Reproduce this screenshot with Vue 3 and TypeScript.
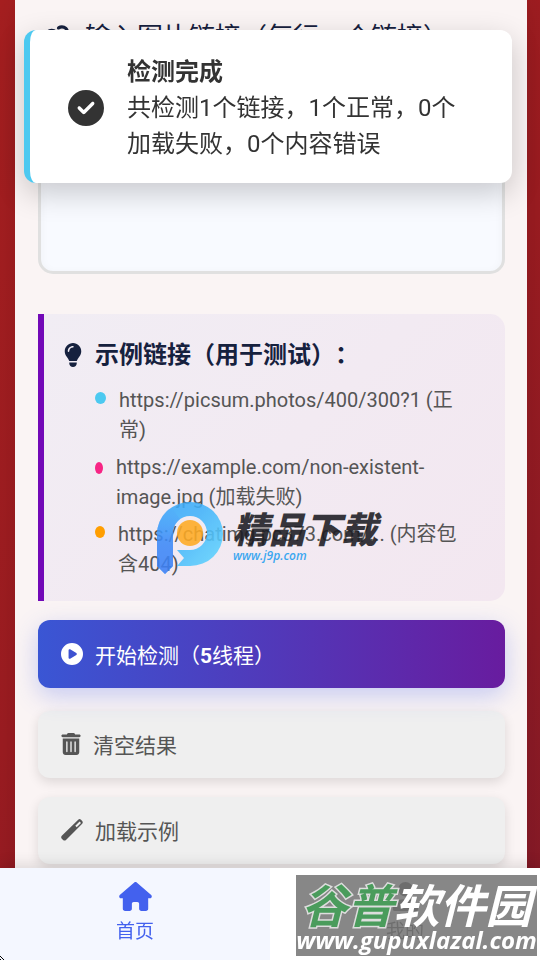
<script setup lang="ts">
import { ref } from 'vue'

interface Sample {
  text: string
  tone: string
}

const links = ref('')

const samples: Sample[] = [
  { text: 'https://picsum.photos/400/300?1 (正常)', tone: 'ok' },
  { text: 'https://example.com/non-existent-image.jpg (加载失败)', tone: 'fail' },
  { text: 'https://chatimg.pc373.com/... (内容包含404)', tone: 'warn' },
]
</script>

<template>
  <div class="page">
    <div class="toast" role="status">
      <svg class="toast-icon" viewBox="0 0 512 512" aria-hidden="true">
        <path d="M256 512A256 256 0 1 0 256 0a256 256 0 1 0 0 512zM369 209L241 337c-9.4 9.4-24.6 9.4-33.9 0l-64-64c-9.4-9.4-9.4-24.6 0-33.9s24.6-9.4 33.9 0l47 47L335 175c9.4-9.4 24.6-9.4 33.9 0s9.4 24.6 0 33.9z" />
      </svg>
      <div class="toast-body">
        <strong>检测完成</strong>
        <p>共检测1个链接，1个正常，0个加载失败，0个内容错误</p>
      </div>
    </div>

    <main class="card">
      <label class="heading" for="links">
        <svg class="link-icon" viewBox="0 0 640 512" aria-hidden="true">
          <path d="M579.8 267.7c56.5-56.5 56.5-148 0-204.5c-50-50-128.8-56.5-186.3-15.4l-1.6 1.1c-14.4 10.3-17.7 30.3-7.4 44.6s30.3 17.7 44.6 7.4l1.6-1.1c32.1-22.9 76-19.3 103.8 8.6c31.5 31.5 31.5 82.5 0 114L422.3 334.8c-31.5 31.5-82.5 31.5-114 0c-27.9-27.9-31.5-71.8-8.6-103.8l1.1-1.6c10.3-14.4 6.9-34.4-7.4-44.6s-34.4-6.9-44.6 7.4l-1.1 1.6C206.5 251.2 213 330 263 380c56.5 56.5 148 56.5 204.5 0L579.8 267.7zM60.2 244.3c-56.5 56.5-56.5 148 0 204.5c50 50 128.8 56.5 186.3 15.4l1.6-1.1c14.4-10.3 17.7-30.3 7.4-44.6s-30.3-17.7-44.6-7.4l-1.6 1.1c-32.1 22.9-76 19.3-103.8-8.6C74 372 74 321 105.5 289.5L217.7 177.2c31.5-31.5 82.5-31.5 114 0c27.9 27.9 31.5 71.8 8.6 103.9l-1.1 1.6c-10.3 14.4-6.9 34.4 7.4 44.6s34.4 6.9 44.6-7.4l1.1-1.6C433.5 260.8 427 182 377 132c-56.5-56.5-148-56.5-204.5 0L60.2 244.3z" />
        </svg>
        <span>输入图片链接（每行一个链接）</span>
      </label>
      <textarea id="links" v-model="links" class="links"></textarea>

      <section class="samples">
        <h3>
          <svg class="bulb-icon" viewBox="0 0 384 512" aria-hidden="true">
            <path d="M272 384c9.6-31.9 29.5-59.1 49.2-86.2c5.2-7.1 10.4-14.2 15.4-21.4c19.8-28.5 31.4-63 31.4-100.3C368 78.8 289.2 0 192 0S16 78.8 16 176c0 37.3 11.6 71.9 31.4 100.3c5 7.2 10.2 14.3 15.4 21.4c19.8 27.1 39.7 54.4 49.2 86.2H272zM192 512c44.2 0 80-35.8 80-80V416H112v16c0 44.2 35.8 80 80 80zM112 176c0 8.8-7.2 16-16 16s-16-7.2-16-16c0-61.9 50.1-112 112-112c8.8 0 16 7.2 16 16s-7.2 16-16 16c-44.2 0-80 35.8-80 80z" />
          </svg>
          <span>示例链接（用于测试）：</span>
        </h3>
        <ul>
          <li v-for="s in samples" :key="s.tone">
            <i class="dot" :class="s.tone"></i>
            <span>{{ s.text }}</span>
          </li>
        </ul>
        <div class="brand" aria-hidden="true">
          <svg class="brand-logo" viewBox="0 0 70 78">
            <defs>
              <linearGradient id="ring" x1="0" y1="0" x2="1" y2="1">
                <stop offset="0" stop-color="#3aa5fb" />
                <stop offset="0.4" stop-color="#41b3fb" />
                <stop offset="1" stop-color="#67dcff" />
              </linearGradient>
              <linearGradient id="stem" x1="0" y1="0" x2="0" y2="1">
                <stop offset="0" stop-color="#3c97fa" stop-opacity="0" />
                <stop offset="0.5" stop-color="#3d8bf8" />
                <stop offset="1" stop-color="#3d7ff6" />
              </linearGradient>
            </defs>
            <path fill="url(#ring)" d="M2 36A33 32 0 1 1 35 68H22L29 60L22 52H35A17 17 0 1 0 18 35V68L10 76L2 68Z" />
            <path fill="url(#stem)" d="M2 36C2 26 8 14 16 9L25 21C20 25 18 30 18 35V68L10 76L2 68Z" />
            <circle cx="35" cy="35" r="13" fill="#ffab24" />
          </svg>
          <div class="brand-text">
            <b>精品下载</b>
            <span>www.j9p.com</span>
          </div>
        </div>
      </section>

      <div class="actions">
        <button type="button" class="btn primary">
          <svg class="play-icon" viewBox="0 0 512 512" aria-hidden="true">
            <path d="M0 256a256 256 0 1 1 512 0A256 256 0 1 1 0 256zM188.3 147.1c-7.6 4.2-12.3 12.3-12.3 20.9V344c0 8.7 4.7 16.7 12.3 20.9s16.8 4.1 24.3-.5l144-88c7.1-4.4 11.5-12.1 11.5-20.5s-4.4-16.1-11.5-20.5l-144-88c-7.4-4.5-16.7-4.7-24.3-.5z" />
          </svg>
          <span>开始检测（<b>5</b>线程）</span>
        </button>
        <button type="button" class="btn">
          <svg class="trash-icon" viewBox="0 0 448 512" aria-hidden="true">
            <path d="M135.2 17.7L128 32H32C14.3 32 0 46.3 0 64S14.3 96 32 96H416c17.7 0 32-14.3 32-32s-14.3-32-32-32H320l-7.2-14.3C307.4 6.8 296.3 0 284.2 0H163.8c-12.1 0-23.2 6.8-28.6 17.7zM416 128H32V448c0 35.3 28.7 64 64 64H352c35.3 0 64-28.7 64-64V128zM144 208V432c0 8.8-7.2 16-16 16s-16-7.2-16-16V208c0-8.8 7.2-16 16-16s16 7.2 16 16zm96 0V432c0 8.8-7.2 16-16 16s-16-7.2-16-16V208c0-8.8 7.2-16 16-16s16 7.2 16 16zm96 0V432c0 8.8-7.2 16-16 16s-16-7.2-16-16V208c0-8.8 7.2-16 16-16s16 7.2 16 16z" />
          </svg>
          <span>清空结果</span>
        </button>
        <button type="button" class="btn">
          <svg class="wand-icon" viewBox="0 0 22 22" aria-hidden="true">
            <path fill-rule="evenodd" d="M17.2 .7a2.2 2.2 0 0 1 2.8 0l1.2 1.2a2.2 2.2 0 0 1 0 2.8L5 20.9a2.2 2.2 0 0 1-2.9 0L.8 19.7a2.2 2.2 0 0 1 0-2.9zM18.6 2.5l-4.3 4.3 1.4 1.4 4.3-4.3z" />
          </svg>
          <span>加载示例</span>
        </button>
      </div>
    </main>

    <nav class="tabs">
      <a class="tab active" href="#home">
        <svg class="tab-icon" viewBox="0 0 576 512" aria-hidden="true">
          <path d="M575.8 255.5c0 18-15 32.1-32 32.1h-32l.7 160.2c0 2.7-.2 5.4-.5 8.1V472c0 22.1-17.9 40-40 40H392c-22.1 0-40-17.9-40-40V384c0-17.7-14.3-32-32-32H256c-17.7 0-32 14.3-32 32v88c0 22.1-17.9 40-40 40H104c-22.1 0-40-17.9-40-40V287.6H32c-18 0-32-14-32-32.1c0-9 3-17 10-24L266.4 8c7-7 15-8 22-8s15 2 21 7L564.8 231.5c8 7 12 15 11 24z" />
        </svg>
        <span>首页</span>
      </a>
      <a class="tab" href="#mine">
        <svg class="tab-icon" viewBox="0 0 448 512" aria-hidden="true">
          <path d="M224 256A128 128 0 1 0 224 0a128 128 0 1 0 0 256zm-45.7 48C79.8 304 0 383.8 0 482.3C0 498.7 13.3 512 29.7 512H418.3c16.4 0 29.7-13.3 29.7-29.7C448 383.8 368.2 304 269.7 304H178.3z" />
        </svg>
        <span>我的</span>
      </a>
      <div class="site" aria-hidden="true">
        <div class="site-name"><em>谷普</em>软件园</div>
        <div class="site-url">www.gupuxlazal.com</div>
      </div>
      <svg class="grip" viewBox="0 0 4 4" aria-hidden="true">
        <path d="M0 0h1v1h-1zM1 1h1v1h-1zM2 2h1v1h-1zM3 3h1v1h-1zM0 3h1v1h-1z" />
      </svg>
    </nav>
  </div>
</template>

<style>
body {
  margin: 0;
}
</style>

<style scoped>
* {
  box-sizing: border-box;
}

.page {
  min-height: 100vh;
  padding: 0 13px 0 15px;
  display: flex;
  font-family: Roboto, "Noto Sans CJK SC", sans-serif;
  text-spacing-trim: space-all;
  background: linear-gradient(135deg, #a71f20 0%, #9c1c21 50%, #851a28 100%);
}

svg {
  display: block;
  flex: none;
  fill: currentColor;
}

.toast {
  position: fixed;
  z-index: 10;
  top: 30px;
  left: 24px;
  right: 28px;
  display: flex;
  align-items: flex-start;
  gap: 23px;
  padding: 24px 38px 21px;
  border-left: 6px solid #4cc9f0;
  border-radius: 12px;
  background: #fff;
  color: #333;
  font-size: 24px;
  line-height: 36px;
  box-shadow: 0 10px 30px rgba(0, 0, 0, 0.2);
}

.toast-icon {
  align-self: center;
  width: 36px;
  height: 36px;
}

.toast-body strong {
  display: block;
  font-weight: 700;
}

.toast-body p {
  margin: 0;
}

.card {
  flex: 1;
  min-width: 0;
  display: flex;
  flex-direction: column;
  padding: 18px 22px 92px 23px;
  background: #faf4f4;
  box-shadow: 0 0 30px rgba(0, 0, 0, 0.12);
}

.heading {
  display: flex;
  align-items: center;
  gap: 15px;
  color: #16213e;
  font-size: 26px;
  line-height: 38px;
  white-space: nowrap;
}

.link-icon {
  width: 32px;
  height: 26px;
}

.links {
  display: block;
  width: 100%;
  height: 202px;
  margin: 16px 0 40px;
  padding: 20px;
  border: 3px solid #e0e0e0;
  border-radius: 15px;
  outline: none;
  background: #f8faff;
  font: inherit;
  font-size: 21px;
  resize: none;
  box-shadow: inset 0 2px 10px rgba(0, 0, 0, 0.04);
}

.samples {
  position: relative;
  padding: 23px 34px 22px 20px;
  border-left: 6px solid #7209b7;
  border-radius: 0 15px 15px 0;
  background: linear-gradient(135deg, #f1edf4, #f3e7f0);
}

.samples h3 {
  display: flex;
  align-items: center;
  gap: 13px;
  margin: 0;
  color: #16213e;
  font-size: 24px;
  font-weight: 700;
  line-height: 36px;
}

.bulb-icon {
  width: 18px;
  height: 24px;
}

.samples ul {
  display: flex;
  flex-direction: column;
  gap: 7px;
  margin: 12px 0 0;
  padding: 0 0 0 31px;
  list-style: none;
}

.samples li {
  display: flex;
  align-items: flex-start;
  gap: 13px;
  color: #555;
  font-size: 20px;
  line-height: 30px;
}

.dot {
  flex: none;
  width: 11px;
  height: 12px;
  margin-top: 7px;
  border-radius: 50%;
}

.ok {
  background: #4cc9f0;
}

.fail {
  width: 8px;
  margin-top: 10px;
  background: #f72585;
}

.warn {
  width: 10px;
  background: #ff9e00;
}

.brand {
  position: absolute;
  left: 111px;
  top: 184px;
  display: flex;
  gap: 8px;
  opacity: 0.88;
}

.brand-logo {
  width: 70px;
  height: 78px;
}

.brand-text {
  display: flex;
  flex-direction: column;
  padding-top: 14px;
  font-style: italic;
  white-space: nowrap;
}

.brand-text b {
  color: #1c1c22;
  font-size: 36px;
  font-weight: 900;
  line-height: 38px;
}

.brand-text span {
  color: #1f9ff0;
  font-family: "Open Sans", sans-serif;
  font-size: 12px;
  font-weight: 600;
  line-height: 12px;
}

.actions {
  display: flex;
  flex-direction: column;
  gap: 19px;
  margin-top: 19px;
}

.btn {
  display: flex;
  align-items: center;
  gap: 12px;
  height: 67px;
  padding: 0 23px 2px;
  border: 0;
  border-radius: 12px;
  background: #efefef;
  color: #555;
  font: inherit;
  font-size: 21px;
  box-shadow: 0 4px 12px rgba(0, 0, 0, 0.12);
}

.primary {
  position: relative;
  height: 68px;
  margin-bottom: 4px;
  padding-bottom: 0;
  background: linear-gradient(90deg, #3a56d4, #681c9f);
  color: #fff;
  box-shadow: 0 8px 24px rgba(67, 97, 238, 0.28);
}

.play-icon {
  width: 22px;
  height: 22px;
}

.trash-icon {
  width: 20px;
  height: 22px;
}

.wand-icon {
  width: 22px;
  height: 22px;
}

.tabs {
  position: fixed;
  z-index: 5;
  left: 0;
  right: 0;
  bottom: 0;
  display: flex;
  height: 92px;
  background: #fff;
  box-shadow: 0 -3px 14px rgba(0, 0, 0, 0.12);
}

.tab {
  flex: 1;
  display: flex;
  flex-direction: column;
  align-items: center;
  gap: 7px;
  padding-top: 14px;
  color: #666;
  font-size: 19px;
  line-height: 28px;
  text-decoration: none;
}

.active {
  background: #f4f7ff;
  color: #4361ee;
}

.tab-icon {
  width: 33px;
  height: 29px;
}

.site {
  position: absolute;
  right: 3px;
  top: 7px;
  width: 241px;
  height: 81px;
  overflow: hidden;
  background: rgba(112, 112, 112, 0.84);
  color: #fff;
  text-align: center;
  white-space: nowrap;
}

.site-name {
  margin-top: 9px;
  font-size: 46px;
  font-style: italic;
  font-weight: 700;
  line-height: 46px;
}

.site-name em {
  color: #4a9c5c;
  -webkit-text-stroke: 3px #ddd;
  paint-order: stroke fill;
}

.site-url {
  font-family: "Open Sans", sans-serif;
  font-size: 24px;
  font-style: italic;
  font-weight: 700;
  line-height: 20px;
}

.grip {
  position: absolute;
  left: 0;
  bottom: 0;
  width: 4px;
  height: 4px;
}
</style>
